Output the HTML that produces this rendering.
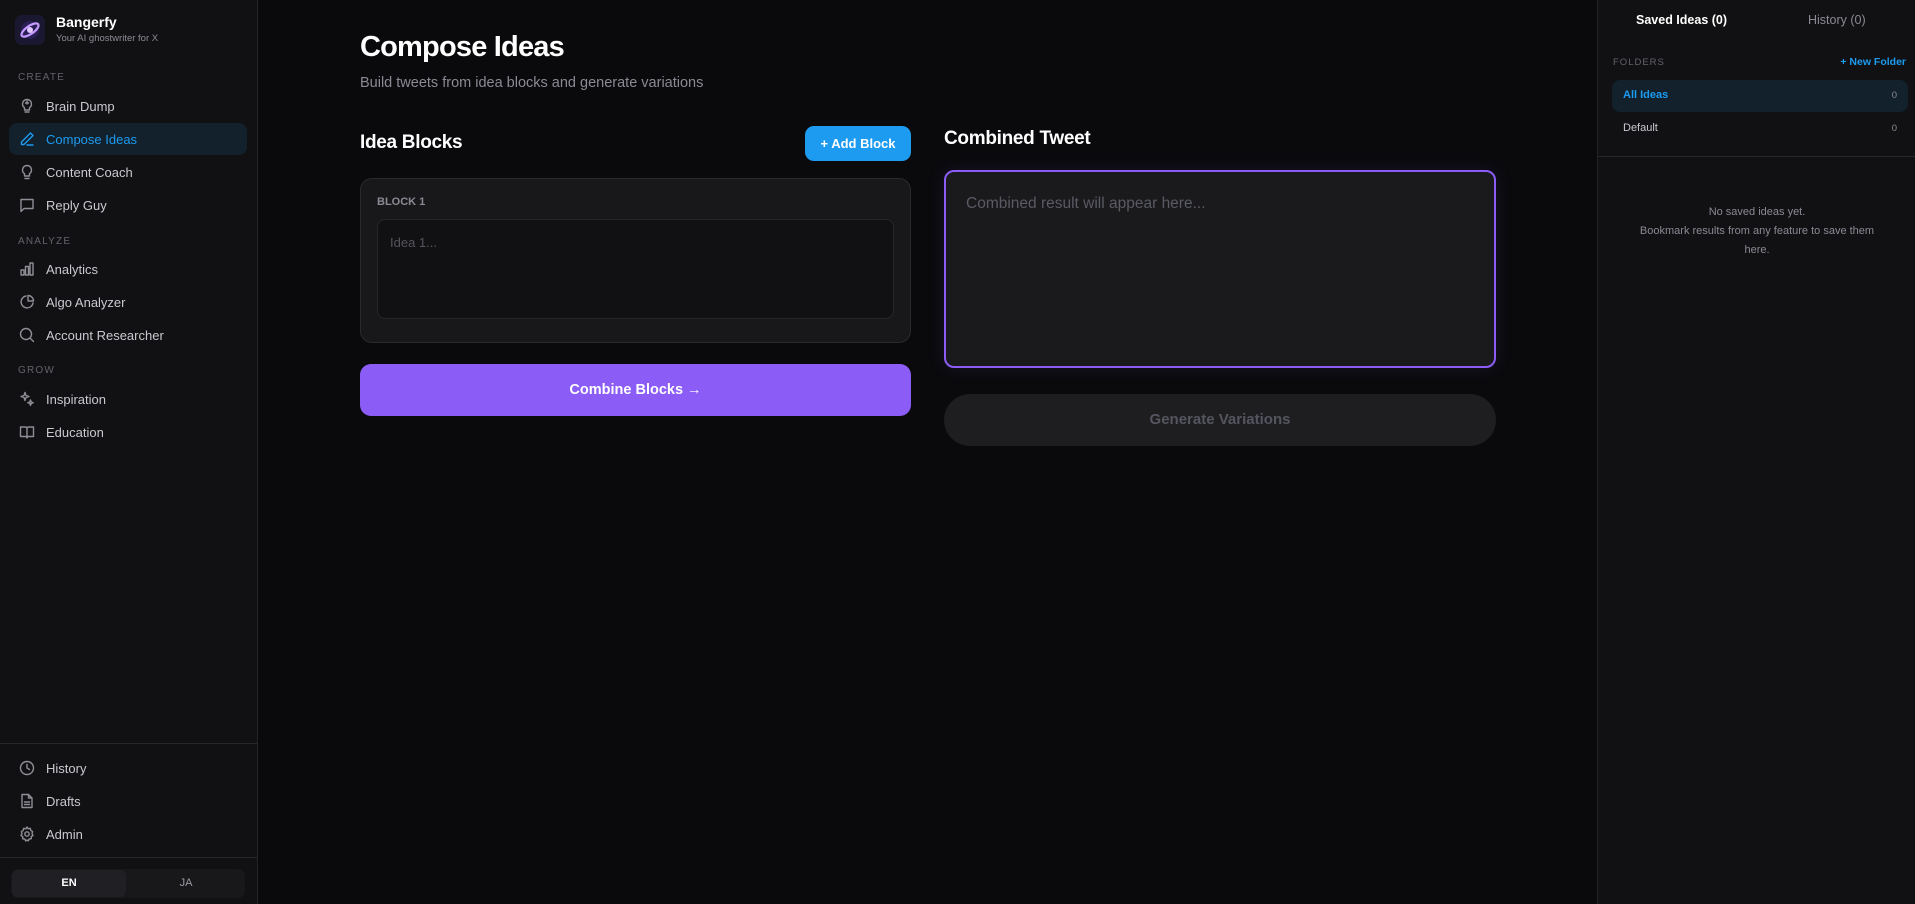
<!DOCTYPE html>
<html><head><meta charset="utf-8"><style>
*{box-sizing:border-box;margin:0;padding:0}
body{width:1915px;height:904px;background:#0a0a0c;font-family:"Liberation Sans",sans-serif;color:#e6e6ea;position:relative;overflow:hidden}
.abs{position:absolute}
#side{left:0;top:0;width:258px;height:904px;background:#111113;border-right:1px solid #232327}
.sec{position:absolute;left:18px;font-size:10px;letter-spacing:1.2px;color:#62626c}
.item{position:absolute;left:9px;width:238px;height:32px;display:flex;align-items:center;font-size:13px;color:#c9c9d0;border-radius:8px}
.item svg{position:absolute;left:10px;width:16px;height:16px;fill:none;stroke:#8e8e96;stroke-width:1.4;stroke-linecap:round;stroke-linejoin:round}
.item span{position:absolute;left:37px}
.item.act{background:#13212c;color:#1d9bf0}
.item.act svg{stroke:#1d9bf0}
#right{left:1597px;top:0;width:318px;height:904px;background:#111113;border-left:1px solid #232327}
.h2{font-size:19px;font-weight:bold;color:#fff;letter-spacing:-0.3px}
</style></head><body>
<div id="side" class="abs">
  <div class="abs" style="left:15px;top:15px;width:30px;height:30px;border-radius:7px;background:#1a1830;overflow:hidden">
    <svg width="30" height="30" viewBox="0 0 30 30"><circle cx="15" cy="15" r="9" fill="#2a1f55"/><ellipse cx="15" cy="15" rx="10" ry="4" fill="none" stroke="#c59bff" stroke-width="2.2" transform="rotate(-35 15 15)"/><circle cx="15" cy="15" r="3" fill="#e0c8ff"/></svg>
  </div>
  <div class="abs" style="left:56px;top:14px;font-size:14px;font-weight:bold;color:#fff">Bangerfy</div>
  <div class="abs" style="left:56px;top:33px;font-size:9.5px;color:#8c8c96">Your AI ghostwriter for X</div>
  <div class="sec" style="top:72px">CREATE</div>
  <div class="item" style="top:90px"><svg viewBox="0 0 16 16"><path d="M8 1.5a4.5 4.5 0 0 0-2.5 8.2V12h5V9.7A4.5 4.5 0 0 0 8 1.5zM6 14h4"/><path d="M8 3v3M6.5 5h3"/></svg><span>Brain Dump</span></div>
  <div class="item act" style="top:123px"><svg viewBox="0 0 16 16"><path d="M11.5 2l2.5 2.5L5 13.5H2.5V11zM8 14h6"/></svg><span>Compose Ideas</span></div>
  <div class="item" style="top:156px"><svg viewBox="0 0 16 16"><path d="M8 1.5a4.5 4.5 0 0 0-2.5 8.2V12h5V9.7A4.5 4.5 0 0 0 8 1.5zM6 14.5h4"/></svg><span>Content Coach</span></div>
  <div class="item" style="top:189px"><svg viewBox="0 0 16 16"><path d="M2 2.5h12v9H5l-3 3z"/></svg><span>Reply Guy</span></div>
  <div class="sec" style="top:236px">ANALYZE</div>
  <div class="item" style="top:253px"><svg viewBox="0 0 16 16"><path d="M2 9h3v5H2zM6.5 5.5h3V14h-3zM11 2h3v12h-3z"/></svg><span>Analytics</span></div>
  <div class="item" style="top:286px"><svg viewBox="0 0 16 16"><path d="M14 9A6 6 0 1 1 7 2"/><path d="M9 1.5A5.5 5.5 0 0 1 14.5 7H9z"/></svg><span>Algo Analyzer</span></div>
  <div class="item" style="top:319px"><svg viewBox="0 0 16 16"><circle cx="7" cy="7" r="5.5"/><path d="M11 11l3.5 3.5"/></svg><span>Account Researcher</span></div>
  <div class="sec" style="top:365px">GROW</div>
  <div class="item" style="top:383px"><svg viewBox="0 0 16 16"><path d="M6 1.5l1 3 3 1-3 1-1 3-1-3-3-1 3-1zM11.5 9l.7 2 2 .7-2 .7-.7 2-.7-2-2-.7 2-.7z"/></svg><span>Inspiration</span></div>
  <div class="item" style="top:416px"><svg viewBox="0 0 16 16"><path d="M1.5 3h5A1.5 1.5 0 0 1 8 4.5V14a1.5 1.5 0 0 0-1.5-1.5h-5zM14.5 3h-5A1.5 1.5 0 0 0 8 4.5V14a1.5 1.5 0 0 1 1.5-1.5h5z"/></svg><span>Education</span></div>
  <div class="abs" style="left:0;top:743px;width:258px;border-top:1px solid #26262a"></div>
  <div class="item" style="top:752px"><svg viewBox="0 0 16 16"><circle cx="8" cy="8" r="6.5"/><path d="M8 4.5V8l2.5 1.5"/></svg><span>History</span></div>
  <div class="item" style="top:785px"><svg viewBox="0 0 16 16"><path d="M3 1.5h6.5L13 5v9.5H3zM9.5 1.5V5H13M5.5 9h5M5.5 11.5h5"/></svg><span>Drafts</span></div>
  <div class="item" style="top:818px"><svg viewBox="0 0 16 16"><circle cx="8" cy="8" r="2.2"/><path d="M8 1l1.2 1.8 2.1-.5.5 2.1L13.6 5.6 13 7.7l1 1.8-1.8 1.1.1 2.1-2.1.3-1 1.9L8 14l-1.2 1-1-1.9-2.1-.3.1-2.1L2 9.5l1-1.8-.6-2.1 1.8-1.2.5-2.1 2.1.5z"/></svg><span>Admin</span></div>
  <div class="abs" style="left:0;top:857px;width:258px;border-top:1px solid #26262a"></div>
  <div class="abs" style="left:11px;top:869px;width:234px;height:29px;background:#18181b;border-radius:7px">
    <div class="abs" style="left:1px;top:1px;width:114px;height:27px;background:#202024;border-radius:6px;text-align:center;line-height:27px;font-size:11px;font-weight:bold;color:#fff">EN</div>
    <div class="abs" style="left:117px;top:1px;width:116px;height:27px;text-align:center;line-height:27px;font-size:11px;color:#9a9aa4">JA</div>
  </div>
</div>

<div class="abs" style="left:360px;top:31px;font-size:29px;font-weight:bold;color:#fff;letter-spacing:-0.8px">Compose Ideas</div>
<div class="abs" style="left:360px;top:75px;font-size:14.5px;color:#8a8a94">Build tweets from idea blocks and generate variations</div>

<div class="abs h2" style="left:360px;top:132px">Idea Blocks</div>
<div class="abs" style="left:805px;top:126px;width:106px;height:35px;background:#1d9bf0;border-radius:9px;text-align:center;line-height:35px;font-size:13px;font-weight:bold;color:#fff">+ Add Block</div>
<div class="abs" style="left:360px;top:178px;width:551px;height:165px;background:#18181b;border:1px solid #2a2a2e;border-radius:12px"></div>
<div class="abs" style="left:377px;top:196px;font-size:11px;font-weight:bold;color:#8a8a94">BLOCK 1</div>
<div class="abs" style="left:377px;top:219px;width:517px;height:100px;background:#111113;border:1px solid #26262a;border-radius:8px"></div>
<div class="abs" style="left:390px;top:235px;font-size:13px;color:#55555e">Idea 1...</div>
<div class="abs" style="left:360px;top:364px;width:551px;height:52px;background:#8b5cf6;border-radius:11px;text-align:center;line-height:52px;font-size:14.5px;font-weight:bold;color:#fff">Combine Blocks →</div>

<div class="abs h2" style="left:944px;top:128px">Combined Tweet</div>
<div class="abs" style="left:944px;top:170px;width:552px;height:198px;background:#1a1a1d;border:2px solid #8b5cf6;border-radius:10px;box-shadow:0 0 18px rgba(139,92,246,0.12)"></div>
<div class="abs" style="left:966px;top:195px;font-size:15.5px;color:#5a5a64">Combined result will appear here...</div>
<div class="abs" style="left:944px;top:394px;width:552px;height:52px;background:#1e1e21;border-radius:26px;text-align:center;line-height:52px;font-size:15px;font-weight:bold;color:#55555f">Generate Variations</div>

<div id="right" class="abs">
  <div class="abs" style="left:38px;top:13px;font-size:12.5px;font-weight:bold;color:#fff">Saved Ideas (0)</div>
  <div class="abs" style="left:210px;top:13px;font-size:12.5px;color:#8a8a94">History (0)</div>
  <div class="abs" style="left:15px;top:57px;font-size:9.5px;letter-spacing:1px;color:#62626c">FOLDERS</div>
  <div class="abs" style="right:9px;top:56px;font-size:10.5px;font-weight:bold;color:#1d9bf0">+ New Folder</div>
  <div class="abs" style="left:14px;top:80px;width:296px;height:32px;background:#13212c;border-radius:8px"></div>
  <div class="abs" style="left:25px;top:89px;font-size:11px;font-weight:bold;color:#1d9bf0">All Ideas</div>
  <div class="abs" style="right:18px;top:90px;font-size:9.5px;color:#8a8a94">0</div>
  <div class="abs" style="left:25px;top:122px;font-size:11px;color:#c9c9d0">Default</div>
  <div class="abs" style="right:18px;top:123px;font-size:9.5px;color:#8a8a94">0</div>
  <div class="abs" style="left:0;top:156px;width:318px;border-top:1px solid #26262a"></div>
  <div class="abs" style="left:0;top:203px;width:318px;text-align:center;font-size:11px;line-height:19px;color:#8a8a94">No saved ideas yet.<br>Bookmark results from any feature to save them<br>here.</div>
</div>
</body></html>
